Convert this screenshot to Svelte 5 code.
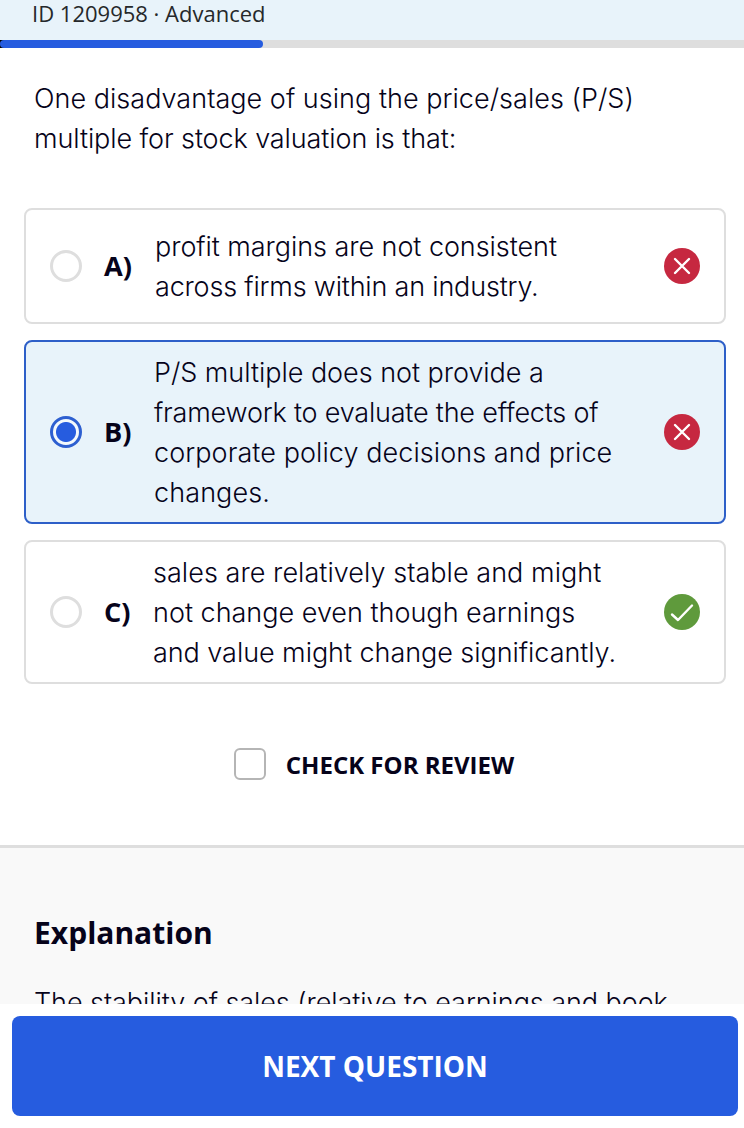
<script lang="ts">
  type Line = { text: string; tracking: number };
  type Choice = { letter: string; lines: Line[]; correct: boolean };

  const progress = 35.35;

  const question: Line[] = [
    { text: "One disadvantage of using the price/sales (P/S)", tracking: 0.03 },
    { text: "multiple for stock valuation is that:", tracking: -0.1 },
  ];

  const choices: Choice[] = [
    {
      letter: "A",
      lines: [
        { text: "profit margins are not consistent", tracking: -0.06 },
        { text: "across firms within an industry.", tracking: -0.19 },
      ],
      correct: false,
    },
    {
      letter: "B",
      lines: [
        { text: "P/S multiple does not provide a", tracking: -0.04 },
        { text: "framework to evaluate the effects of", tracking: -0.2 },
        { text: "corporate policy decisions and price", tracking: 0.07 },
        { text: "changes.", tracking: 0.1 },
      ],
      correct: false,
    },
    {
      letter: "C",
      lines: [
        { text: "sales are relatively stable and might", tracking: 0.05 },
        { text: "not change even though earnings", tracking: 0 },
        { text: "and value might change significantly.", tracking: -0.05 },
      ],
      correct: true,
    },
  ];

  const explanation: Line[] = [
    { text: "The stability of sales (relative to earnings and book", tracking: -0.07 },
  ];

  let selected = $state("B");
  let review = $state(false);
</script>

{#snippet copy(lines: Line[])}
  {#each lines as line}
    <span class="line" style={`letter-spacing: ${line.tracking}px`}>{line.text}</span>
  {/each}
{/snippet}

<div class="page">
  <header>ID 1209958 · Advanced</header>
  <div class="track">
    <div class="bar" style={`width: ${progress}%`}></div>
  </div>

  <main>
    <p class="question copy">{@render copy(question)}</p>

    <div class="choices">
      {#each choices as choice}
        <button
          class="choice"
          class:selected={selected === choice.letter}
          onclick={() => (selected = choice.letter)}
        >
          <span class="radio"></span>
          <span class={`letter ${choice.letter.toLowerCase()}`}>{choice.letter})</span>
          <span class="copy answer">{@render copy(choice.lines)}</span>
          <svg class="mark" viewBox="0 0 36 36" fill="none">
            {#if choice.correct}
              <circle cx="18" cy="18" r="18" fill="#5f9a3c" />
              <path d="M8 20.5L14 26L28 11.5" />
            {:else}
              <circle cx="18" cy="18" r="18" fill="#c62840" />
              <path d="M11 11L25 25M25 11L11 25" />
            {/if}
          </svg>
        </button>
      {/each}
    </div>

    <label class="review">
      <input type="checkbox" bind:checked={review} />
      <span>CHECK FOR REVIEW</span>
    </label>
  </main>

  <section class="explanation">
    <h2>Explanation</h2>
    <p class="copy">{@render copy(explanation)}</p>
  </section>

  <footer>
    <button class="next">NEXT QUESTION</button>
  </footer>
</div>

<style>
  :global(body) {
    margin: 0;
    background: #fff;
  }
  .page {
    display: flex;
    flex-direction: column;
    width: 744px;
    height: 1128px;
    overflow: hidden;
    color: #06031a;
    background: #fff;
    font-family: "Open Sans", "Noto Sans", sans-serif;
  }
  header {
    box-sizing: border-box;
    height: 40px;
    padding-left: 32px;
    background: #e8f3fa;
    color: #25282a;
    font-size: 22px;
    line-height: 27px;
  }
  .track {
    height: 8px;
    background: linear-gradient(to right, #000 4px, #dedede 4px);
  }
  .bar {
    height: 8px;
    border-radius: 4px;
    background: #265cdf;
  }
  main {
    display: flex;
    flex-direction: column;
    box-sizing: border-box;
    height: 797px;
    padding: 31px 18px 0 24px;
  }
  .copy {
    margin: 0;
    font-family: Inter, "Liberation Sans", sans-serif;
    font-size: 27px;
    font-weight: 300;
    line-height: 40px;
  }
  .line {
    display: block;
    white-space: nowrap;
  }
  .question {
    padding-left: 10px;
  }
  .choices {
    display: flex;
    flex-direction: column;
    gap: 16px;
    margin-top: 49px;
  }
  .choice {
    display: flex;
    align-items: center;
    box-sizing: border-box;
    min-height: 116px;
    padding: 9px 24px;
    border: 2px solid #dedede;
    border-radius: 8px;
    background: #fff;
    color: inherit;
    text-align: left;
  }
  .choice.selected {
    border-color: #2d5fc8;
    background: #e8f3fa;
  }
  .radio {
    box-sizing: border-box;
    width: 32px;
    height: 32px;
    border: 3px solid #dedede;
    border-radius: 50%;
    background: #fff;
  }
  .selected .radio {
    border-color: #2d5fd0;
    background: radial-gradient(circle, #265cdf 9.5px, #f2f8fc 10.5px);
  }
  .letter {
    width: 51px;
    margin-left: 22px;
    font-family: "Open Sans", sans-serif;
    font-size: 27.2px;
    font-weight: 700;
    line-height: 40px;
  }
  .letter.b {
    width: 50px;
  }
  .letter.c {
    width: 49px;
  }
  .answer {
    flex: 1;
    padding-top: 2px;
  }
  .mark {
    width: 36px;
    height: 36px;
  }
  .mark path {
    stroke: #fff;
    stroke-width: 2.4;
    stroke-linecap: round;
    stroke-linejoin: round;
  }
  .review {
    display: flex;
    align-items: center;
    align-self: center;
    gap: 20px;
    margin: 64px 2px 0 0;
    font-size: 24px;
    font-weight: 700;
    line-height: 32px;
  }
  .review span {
    padding-top: 2px;
    line-height: 30px;
  }
  .review input {
    appearance: none;
    box-sizing: border-box;
    width: 32px;
    height: 32px;
    margin: 0;
    border: 2px solid #b5b5b5;
    border-radius: 6px;
    background: #fff;
  }
  .review input:checked {
    background: #265cdf;
  }
  .explanation {
    box-sizing: border-box;
    height: 159px;
    padding: 65px 34px 0;
    overflow: hidden;
    border-top: 3px solid #dedede;
    background: #f9f9f9;
  }
  h2 {
    margin: 0 0 30px;
    font-size: 30px;
    font-weight: 700;
    line-height: 40px;
  }
  footer {
    display: flex;
    padding: 12px 6px 12px 12px;
  }
  .next {
    flex: 1;
    height: 100px;
    padding: 0 0 1px;
    border: 0;
    border-radius: 8px;
    background: #265cdf;
    color: #fff;
    font-family: inherit;
    font-size: 28px;
    font-weight: 700;
  }
</style>
